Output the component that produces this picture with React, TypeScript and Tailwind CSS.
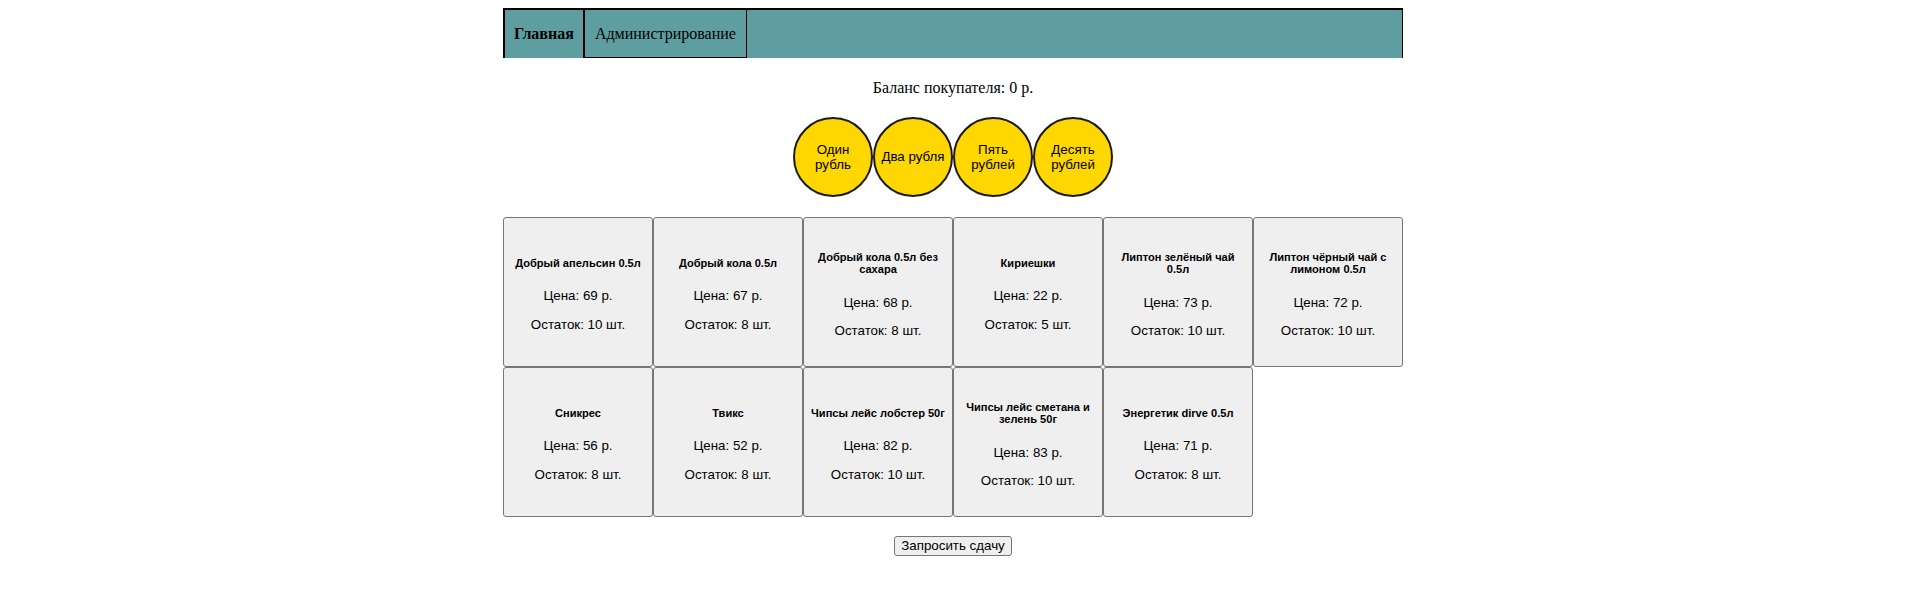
import React from 'react';

type Product = { name: string; price: number; stock: number };

const products: Product[] = [
  { name: 'Добрый апельсин 0.5л', price: 69, stock: 10 },
  { name: 'Добрый кола 0.5л', price: 67, stock: 8 },
  { name: 'Добрый кола 0.5л без сахара', price: 68, stock: 8 },
  { name: 'Кириешки', price: 22, stock: 5 },
  { name: 'Липтон зелёный чай 0.5л', price: 73, stock: 10 },
  { name: 'Липтон чёрный чай с лимоном 0.5л', price: 72, stock: 10 },
  { name: 'Сникрес', price: 56, stock: 8 },
  { name: 'Твикс', price: 52, stock: 8 },
  { name: 'Чипсы лейс лобстер 50г', price: 82, stock: 10 },
  { name: 'Чипсы лейс сметана и зелень 50г', price: 83, stock: 10 },
  { name: 'Энергетик dirve 0.5л', price: 71, stock: 8 },
];

const coins = ['Один рубль', 'Два рубля', 'Пять рублей', 'Десять рублей'];

function ProductCard({ product }: { product: Product }) {
  return (
    <button className="w-[150px] h-[150px] flex flex-col items-center justify-center text-center bg-[#efefef] border border-[#767676] rounded-[3px] px-[6px] py-px text-[13.333px] text-black font-['Liberation_Sans',Arial,sans-serif]">
      <h5 className="text-[11.07px] font-bold leading-[12.7px] my-[18.5px]">{product.name}</h5>
      <p className="leading-[15.3px]">Цена: {product.price} р.</p>
      <p className="leading-[15.3px] my-[13.333px]">Остаток: {product.stock} шт.</p>
    </button>
  );
}

export default function App() {
  return (
    <div className="min-h-[610px] bg-white pr-1 pt-2 font-['Liberation_Serif','Times_New_Roman',serif] text-base text-black">
      <div className="w-[900px] mx-auto">
        {/* Navigation */}
        <ul className="flex h-[50px] bg-[#5f9ea0] border-t-2 border-l-2 border-r border-black">
          <li className="flex items-center px-[9px] font-bold border-r-2 border-black">Главная</li>
          <li className="flex items-center px-[10px] border-r border-b border-black">Администрирование</li>
        </ul>

        <p className="mt-[21px] text-center leading-[18px]">Баланс покупателя: 0 р.</p>

        {/* Coins */}
        <div className="flex justify-center mt-[20px]">
          {coins.map((c) => (
            <button
              key={c}
              className="w-[80px] h-[80px] rounded-full bg-[#ffd700] border-2 border-[#1a1a1a] px-[6px] text-[13.333px] leading-[15.3px] text-black font-['Liberation_Sans',Arial,sans-serif]"
            >
              {c}
            </button>
          ))}
        </div>

        {/* Products */}
        <div className="flex flex-wrap mt-[20px]">
          {products.map((p) => (
            <ProductCard key={p.name} product={p} />
          ))}
        </div>

        <div className="flex justify-center mt-[19px]">
          <button className="h-[20px] px-[6px] bg-[#efefef] border border-[#767676] rounded-[3px] text-[13.333px] leading-[16px] text-black font-['Liberation_Sans',Arial,sans-serif]">
            Запросить сдачу
          </button>
        </div>
      </div>
    </div>
  );
}
